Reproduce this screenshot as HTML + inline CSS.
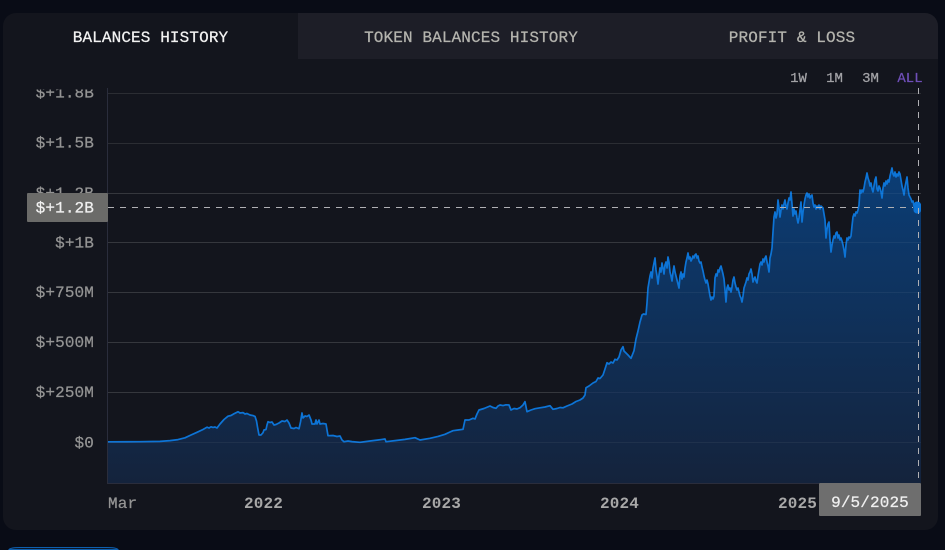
<!DOCTYPE html>
<html><head><meta charset="utf-8"><style>
html,body{margin:0;padding:0;background:#090c16;width:945px;height:550px;overflow:hidden}
svg{display:block;overflow:hidden}
text{font-family:"Liberation Mono",monospace;font-size:16px;letter-spacing:.12px;stroke-width:.25px}
.a{fill:#949494;stroke:#949494;text-anchor:end}
.y{font-weight:bold;fill:#a8a8a8;text-anchor:middle}
.t{text-anchor:middle;fill:#b4b4ae;stroke:#b4b4ae}
.r{font-size:14px;letter-spacing:0;fill:#a2a2a6;stroke:#a2a2a6;text-anchor:middle}
</style></head><body>
<svg width="945" height="550" viewBox="0 0 945 550" xmlns="http://www.w3.org/2000/svg">
<defs>
<linearGradient id="g" gradientUnits="userSpaceOnUse" x1="0" y1="170" x2="0" y2="483"><stop offset="0" stop-color="#0b3d75"/><stop offset="1" stop-color="#14233c"/></linearGradient>
<clipPath id="c"><rect x="0" y="89.5" width="945" height="400"/></clipPath>
<clipPath id="plot"><rect x="108" y="88" width="813" height="395"/></clipPath>
<clipPath id="card"><rect x="3" y="13" width="935" height="517" rx="13"/></clipPath>
</defs>
<rect width="945" height="550" fill="#090c16"/>
<rect x="3" y="13" width="935" height="517" rx="13" fill="#13151d"/>
<g clip-path="url(#card)"><rect x="298" y="13" width="640" height="46" fill="#1d1e27"/></g>
<text x="150.5" y="42" text-anchor="middle" fill="#f2f2f2" stroke="#f2f2f2">BALANCES HISTORY</text>
<text x="471" y="42" class="t">TOKEN BALANCES HISTORY</text>
<text x="792" y="42" class="t">PROFIT &amp; LOSS</text>
<text x="798.5" y="82" class="r">1W</text><text x="834.5" y="82" class="r">1M</text><text x="870.5" y="82" class="r">3M</text>
<text x="910" y="82" class="r" style="fill:#6f4fb8;stroke:#6f4fb8">ALL</text>
<g stroke="#2b2d33" stroke-width="1">
<path d="M108 93.5H921M108 143.5H921M108 193.5H921M108 242.5H921M108 292.5H921M108 342.5H921M108 392.5H921M108 442.5H921"/>
</g>
<path d="M107.5 88V483.5H819" stroke="#2a2d3c" fill="none"/>
<g clip-path="url(#c)">
<text x="94" y="97.5" class="a">$+1.8B</text>
<text x="94" y="147.5" class="a">$+1.5B</text>
<text x="94" y="198" class="a">$+1.2B</text>
<text x="94" y="247.5" class="a">$+1B</text>
<text x="94" y="297" class="a">$+750M</text>
<text x="94" y="347" class="a">$+500M</text>
<text x="94" y="397" class="a">$+250M</text>
<text x="94" y="447.5" class="a">$0</text>
</g>
<g clip-path="url(#plot)">
<path fill="url(#g)" stroke="#0d74d6" stroke-width="1.7" stroke-linejoin="round" d="M100 441.8L108 441.8 140 441.7 160 441.4 170 440.6 178 439.6 185 437.8 191 435 197 432.3 203 429.5 207 427.2 209 428 211 426.8 213 427.4 215 427 217 428 220 424 224 419.5 228 416.2 231 415.5 234 413.8 238 411.7 240 413 243 412.6 245 414 247 413.5 250 415 253 415.6 255 416.4 256.5 421 257.5 427 259 435 261 435 263 432.7 264 430 266 429.5 267 425 268 421.7 270 422.5 272 422 274 425 276 424.5 279 423 282 421 285 421.5 287 420 289 423 291 428 294 428.5 296 427.5 299 428.7 300.5 422 302 413 303 418 305 416 307 416.5 309 415 311 420 312 424 315 424 316 420 317 424 319 420 320 424 323 423.5 326 424 328 435.7 333 435.5 337 436.5 340 436 342 440 344 441.7 348 441 352 441.6 360 442.3 370 441 378 440 385 439 386 441.7 395 440.6 405 439.4 415 437.7 420 440 430 438.3 438 436.4 445 434.3 450 432 453 430.7 458 430 463 429.3 465 420 469 420 473 418.3 475 419 477 414 479 410 484 408.5 490 406 493 407.5 496 408.3 498 406 500 405 503 405.6 506 404.8 509 405 511 410 514 408.5 517 409 520 407.7 523 405 525 401.7 527 411.7 531 410 535 408.7 540 407.8 545 407 550 405.7 553 409.3 557 408.5 560 407.5 563 407.8 567 406 572 404 576 401.5 580 400 583 398 585 395 586 387.7 589 386 593 383 596 381.5 598 378 600 378.5 603 375 605 369 607 362.7 609 364 611 362 613 363 615 359.3 617 360 619 357 621 350 623 346.7 624 351 626 353 628 355 631 358.3 634 350.7 636 339 638 331 640 322 642 315 643.5 314 646 314.5 647 303 648 288 649 282 650 276 651 272 652 278 653 268 654 263 655 258 656 270 657 276 658 284 659 275 660 268 661 272 662 263 663 268 664 274 665 265 666 262 667 268 668 257 669 262 670 272 671 276 672 281 673 272 674 266 675 272 676 276 677 280 678 284 679 288 680 276 681 272 682 279 683 274 684 277 685 268 686 262 687 258 688 253 689 259 690 257 691 261 692 259 693 256 694 258 695 255 696 254 697 258 698 256 699 261 700 263 701 262 702 267 703 271 704 276 705 280 706 283 707 280 708 284 709 290 710 296 711 300 712 297 713 299 714 296 715 278 716 274 717 276 718 270 719 272 720 268 721 266 722 270 723 274 724 279 725 290 726 302 727 288 728 285 729 290 730 288 731 292 732 287 733 280 734 277 735 283 736 287 737 290 738 288 739 292 740 296 741 298 742 302 743 296 744 288 745 285 746 282 747 278 748 280 749 274 750 272 751 269 752 274 753 282 754 279 755 277 756 281 757 283 758 276 759 270 760 264 761 262 762 265 763 259 764 262 765 258 766 256 767 262 768 266 769 272 770 258 771 254 772 248 773 232 774 217 775 212 776 218 777 214 778 200 779 208 780 217 781 210 782 205 783 209 784 204 785 200 786 206 787 209 788 203 789 198 790 200 791 192 792 204 793 216 794 209 795 214 796 211 797 218 798 223 799 218 800 210 801 202 802 222 803 212 804 205 805 199 806 195 807 193 808 197 809 194 810 198 811 196 812 195 813 203 814 207 815 205 816 209 817 206 818 208 819 205 820 209 821 206 822 207 823 208 824 214 825 220 826 238 827 229 828 224 829 222 830 240 831 252 832 245 833 240 834 236 835 238 836 233 837 232 838 238 839 235 840 240 841 238 842 241 843 245 844 250 845 257 846 245 847 238 848 240 849 237 850 238 851 236 852 226 853 217 854 214 855 216 856 212 857 213 858 210 859 205 860 190 861 193 862 190 863 192 864 188 865 182 866 178 867 173 868 178 869 181 870 186 871 183 872 189 873 192 874 186 875 180 876 177 877 189 878 191 879 186 880 188 881 192 882 198 883 188 884 183 885 186 886 181 887 184 888 180 889 182 890 176 891 172 892 168 893 174 894 176 895 172 896 177 897 174 898 176 899 172 900 174 901 180 902 186 903 190 904 195 905 187 906 182 907 177 908 188 909 195 910 197 911 199 912 202 913 201 914 206 915 210 916 204 917 211 918 203 919 212 920 205 926 205V486H100Z"/>
<path d="M108 292.5H921M108 342.5H921M108 392.5H921M108 442.5H921M108 242.5H921M108 193.5H921" stroke="#fff" stroke-opacity=".05" fill="none"/>
</g>
<rect x="913.5" y="201.5" width="7.5" height="12" rx="3.5" fill="#0d74d6"/>
<path d="M918.5 88V481" stroke="#b0b0b4" stroke-dasharray="6 6" fill="none"/>
<path d="M108 207.5H913" stroke="#b0b0b4" stroke-dasharray="6 6" fill="none"/>
<rect x="27" y="193" width="81" height="29" rx="1" fill="#6b6b69"/>
<text x="94" y="212.5" class="a" style="fill:#f0f0f0;stroke:#f0f0f0">$+1.2B</text>
<text x="108" y="508" class="a" style="text-anchor:start">Mar</text>
<text x="263.5" y="508" class="y">2022</text>
<text x="441.5" y="508" class="y">2023</text>
<text x="619.5" y="508" class="y">2024</text>
<text x="797.5" y="508" class="y">2025</text>
<rect x="819" y="483" width="102" height="33" rx="1" fill="#6e6e6e"/>
<text x="870" y="507" text-anchor="middle" fill="#f0f0f0" stroke="#f0f0f0">9/5/2025</text>
<path d="M9 549.5C10 548.3 13 547.5 20 547.5H107C114 547.5 117 548.3 118 549.5Z" fill="#0c1626" stroke="#0e5fae" stroke-width=".9"/>
</svg>
</body></html>
